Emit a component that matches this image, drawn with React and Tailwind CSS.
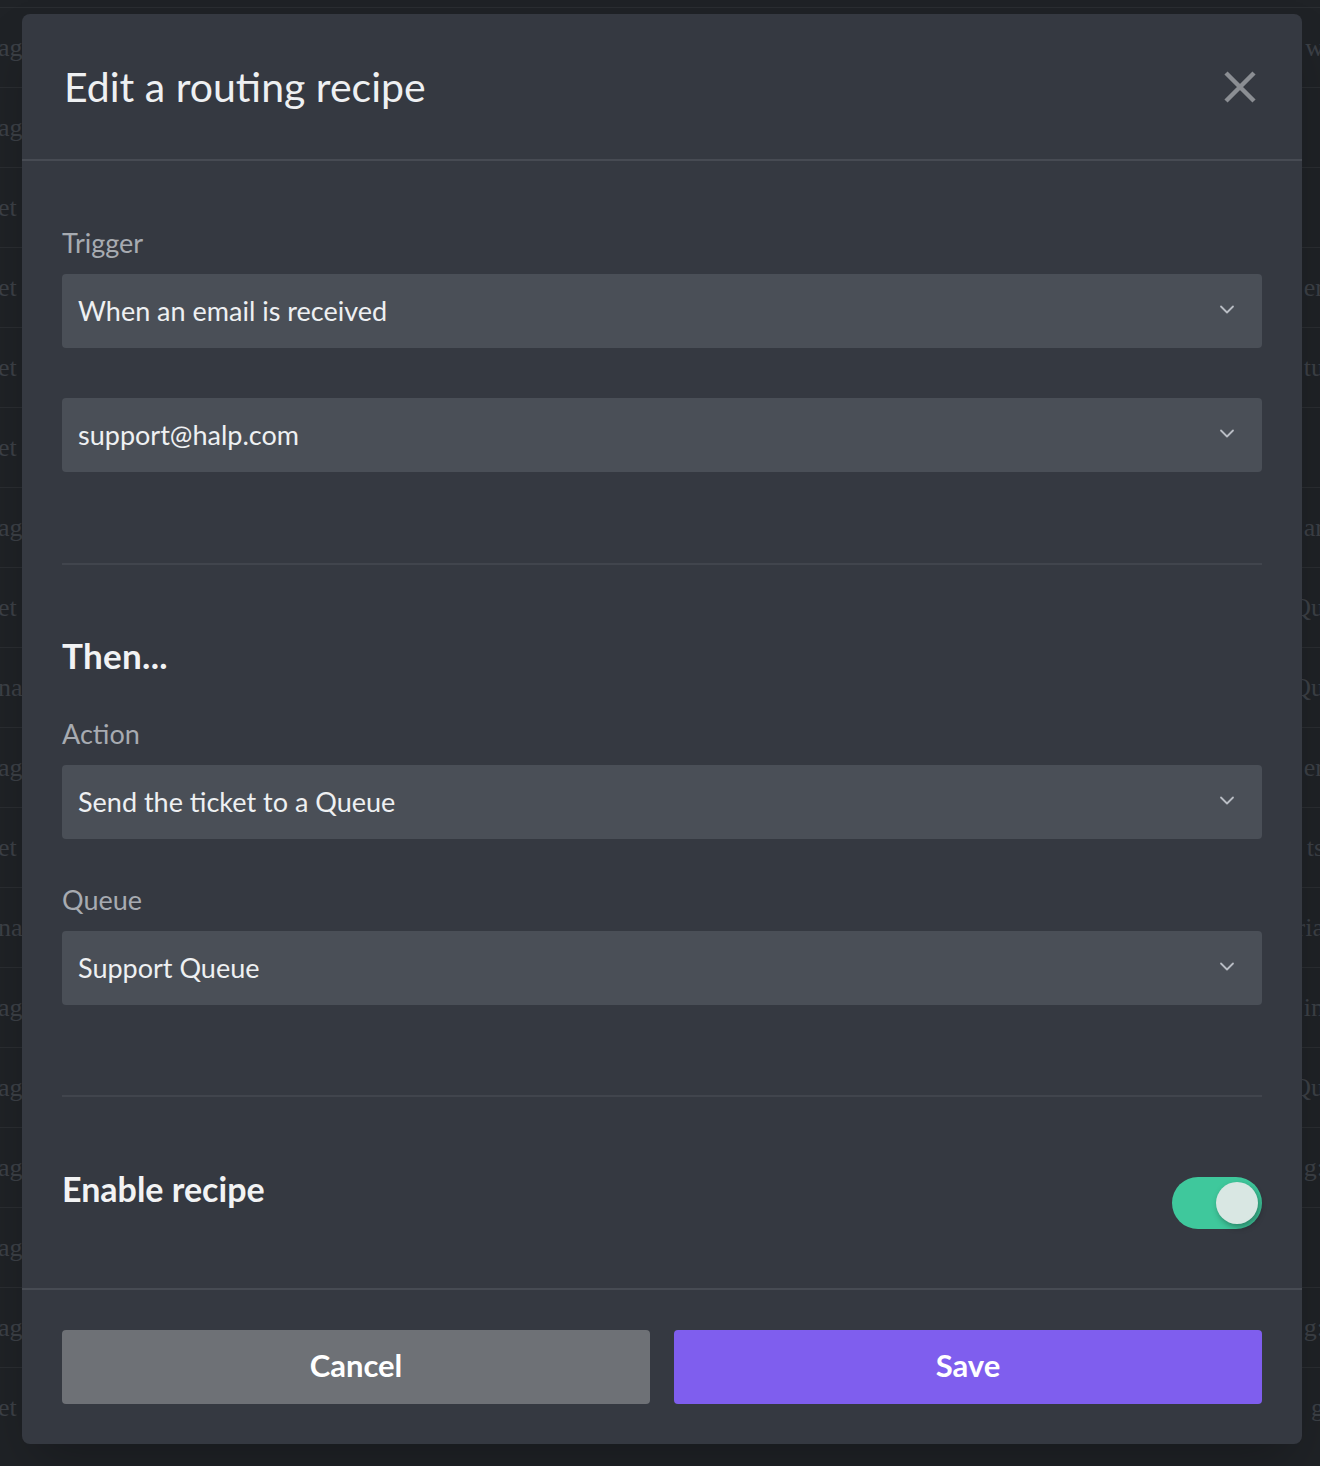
import React, { useState } from 'react';

const LEFT = ["ag","ag","et","et","et","et","ag","et","nai","ag","et","nai","ag","ag","ag","ag","ag","et"];
const RIGHT = ["w","","","er","tu","","ar","Qu","Qu","er","ts","ria","in","Qu","g:","","g:","g"];

function Chevron() {
  return (
    <svg width="18" height="18" viewBox="0 0 18 18" fill="none" className="text-[#b9bdc4] -mt-[4px]">
      <path d="M3 6.5l6 6 6-6" stroke="currentColor" strokeWidth="1.8" strokeLinecap="round" strokeLinejoin="round" />
    </svg>
  );
}

function Select({ value }) {
  return (
    <div className="h-[74px] rounded-[4px] bg-[#4a4f57] flex items-center justify-between pl-[16px] pr-[26px]">
      <span className="text-[27px] text-[#eef0f2]">{value}</span>
      <Chevron />
    </div>
  );
}

function Label({ children }) {
  return <p className="text-[27px] text-[#a7abb1] leading-none mb-[18px]">{children}</p>;
}

export default function App() {
  const [enabled, setEnabled] = useState(true);

  return (
    <div className="relative w-[1320px] h-[1466px] overflow-hidden bg-[#1f2226]" style={{ fontFamily: 'Lato, "Noto Sans", sans-serif' }}>
      {/* page behind the modal */}
      <div className="pt-[7px]">
        {LEFT.map((l, i) => (
          <div key={i} className="h-[80px] border-t border-[#2a2d31] flex items-center justify-between">
            <span className="-ml-[2px] text-[26px] text-[#3c4046]" style={{ fontFamily: '"Liberation Serif", serif' }}>{l}</span>
            <span className="-mr-[4px] text-[26px] text-[#3c4046]" style={{ fontFamily: '"Liberation Serif", serif' }}>{RIGHT[i]}</span>
          </div>
        ))}
      </div>

      {/* modal */}
      <div className="absolute left-[22px] top-[14px] w-[1280px] h-[1430px] rounded-[8px] bg-[#353941] flex flex-col shadow-2xl">
        <div className="h-[147px] border-b-2 border-[#474b53] flex items-center justify-between pl-[42px] pr-[44px]">
          <h1 className="text-[41px] text-[#eef0f2] font-normal">Edit a routing recipe</h1>
          <button className="text-[#8b8e93]">
            <svg width="36" height="36" viewBox="0 0 36 36" fill="none">
              <path d="M4 4l28 28M32 4L4 32" stroke="currentColor" strokeWidth="4.5" />
            </svg>
          </button>
        </div>

        <div className="flex-1 px-[40px] pt-[68px]">
          <Label>Trigger</Label>
          <Select value="When an email is received" />
          <div className="mt-[50px]">
            <Select value="support@halp.com" />
          </div>
          <div className="mt-[91px] border-t-2 border-[#41454d]" />

          <h2 className="mt-[73px] text-[35px] font-bold text-[#f2f3f4] leading-none tracking-[0.3px]">Then...</h2>
          <div className="mt-[47px]">
            <Label>Action</Label>
            <Select value="Send the ticket to a Queue" />
          </div>
          <div className="mt-[47px]">
            <Label>Queue</Label>
            <Select value="Support Queue" />
          </div>
          <div className="mt-[90px] border-t-2 border-[#41454d]" />

          <div className="mt-[75px] flex items-center justify-between">
            <span className="text-[34px] font-bold text-[#f2f3f4] leading-none">Enable recipe</span>
            <button
              onClick={() => setEnabled(!enabled)}
              className={`w-[90px] h-[52px] rounded-full flex items-center px-[4px] -mb-[28px] ${enabled ? 'bg-[#3fc89c] justify-end' : 'bg-[#5a5e66] justify-start'}`}
            >
              <span className="w-[42px] h-[42px] rounded-full bg-[#d9e7e3] shadow-[2px_3px_6px_rgba(0,0,0,0.35)]" />
            </button>
          </div>
        </div>

        <div className="border-t-2 border-[#474b53] px-[40px] pt-[40px] pb-[40px] flex gap-[24px]">
          <button className="flex-1 h-[74px] rounded-[4px] bg-[#6e7176] text-white text-[31px] font-bold pb-[4px]">Cancel</button>
          <button className="flex-1 h-[74px] rounded-[4px] bg-[#7f5eee] text-white text-[31px] font-bold pb-[4px]">Save</button>
        </div>
      </div>
    </div>
  );
}
